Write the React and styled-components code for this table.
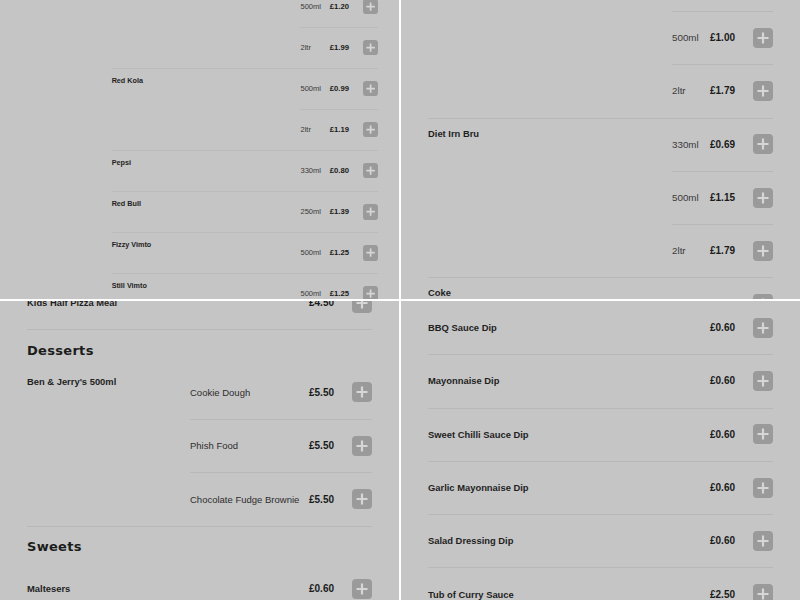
import styled, { createGlobalStyle } from "styled-components";

const GlobalStyle = createGlobalStyle`
  html, body {
    margin: 0;
    padding: 0;
    background: #ffffff;
  }
  * {
    box-sizing: border-box;
  }
`;

const ROW = 53.3;
const LINE = "#b8b8b8";

const Board = styled.div`
  display: grid;
  grid-template-columns: 399px 399px;
  grid-template-rows: 299px 299px;
  gap: 2px;
  width: 800px;
  height: 600px;
  background: #ffffff;
`;

const Panel = styled.div`
  overflow: hidden;
  background: #c5c5c5;
`;

const Sheet = styled.div`
  zoom: ${(p) => p.$zoom || 1};
  margin-top: ${(p) => p.$offset || 0}px;
  padding: 0 27px 0 ${(p) => p.$left || 27}px;
  font-family: "Liberation Sans", Arial, sans-serif;
  color: #1e1e1e;
`;

// separators are drawn as inset shadows so they add no height
const ProductRow = styled.div`
  display: flex;
  align-items: flex-start;
  box-shadow: ${(p) => (p.$divided ? `inset 0 1px 0 ${LINE}` : "none")};
`;

const ProductName = styled.div`
  flex: 1;
  padding-top: 10px;
  font-size: 9.4px;
  line-height: 12px;
  font-weight: 700;
  color: #1f1f1f;
`;

const Variants = styled.div`
  width: ${(p) => p.$width}px;
  flex-shrink: 0;
`;

const VariantRow = styled.div`
  display: flex;
  align-items: center;
  height: ${ROW}px;
  box-shadow: ${(p) => (p.$divided ? `inset 0 1px 0 ${LINE}` : "none")};
`;

const Size = styled.span`
  width: 38px;
  font-size: 9.8px;
  color: #3a3a3a;
`;

const VariantLabel = styled.span`
  flex: 1;
  font-size: 9.5px;
  color: #2e2e2e;
  white-space: nowrap;
`;

const Price = styled.span`
  width: 43px;
  font-size: 10px;
  font-weight: 700;
  color: #1a1a1a;
`;

const ItemRow = styled.div`
  display: flex;
  align-items: center;
  height: ${ROW}px;
  box-shadow: ${(p) => (p.$divided ? `inset 0 1px 0 ${LINE}` : "none")};
`;

const ItemName = styled.span`
  flex: 1;
  font-size: 9.4px;
  font-weight: 700;
  color: #1f1f1f;
`;

const Heading = styled.h2`
  margin: 0;
  padding: 12.5px 0 7px;
  box-shadow: ${(p) => (p.$divided ? `inset 0 1px 0 ${LINE}` : "none")};
  font-family: "DejaVu Sans", sans-serif;
  font-size: 13px;
  line-height: 17px;
  letter-spacing: 0.3px;
  font-weight: 700;
  color: #1c1c1c;
`;

const AddButton = styled.button`
  width: 20px;
  height: 20px;
  padding: 0;
  border: none;
  border-radius: 4px;
  background: #9a9a9a;
  display: grid;
  place-items: center;
  flex-shrink: 0;
  cursor: pointer;
`;

const PlusIcon = () => (
  <svg width="12" height="12" viewBox="0 0 12 12">
    <path d="M6 0.5V11.5M0.5 6H11.5" stroke="#d6d6d6" strokeWidth="2.2" />
  </svg>
);

const Add = () => (
  <AddButton aria-label="Add">
    <PlusIcon />
  </AddButton>
);

// drink with sizes: name on the left, one row per size
const Drink = ({ name, sizes, divided, continued }) => (
  <ProductRow $divided={divided}>
    <ProductName>{name}</ProductName>
    <Variants $width={101}>
      {sizes.map((s, i) => (
        <VariantRow key={i} $divided={i > 0 || continued}>
          <Size>{s.size}</Size>
          <Price>{s.price}</Price>
          <Add />
        </VariantRow>
      ))}
    </Variants>
  </ProductRow>
);

const Item = ({ name, price, divided }) => (
  <ItemRow $divided={divided}>
    <ItemName>{name}</ItemName>
    <Price>{price}</Price>
    <Add />
  </ItemRow>
);

const topLeftDrinks = [
  { name: "", sizes: [{ size: "500ml", price: "£1.20" }, { size: "2ltr", price: "£1.99" }] },
  { name: "Red Kola", sizes: [{ size: "500ml", price: "£0.99" }, { size: "2ltr", price: "£1.19" }] },
  { name: "Pepsi", sizes: [{ size: "330ml", price: "£0.80" }] },
  { name: "Red Bull", sizes: [{ size: "250ml", price: "£1.39" }] },
  { name: "Fizzy Vimto", sizes: [{ size: "500ml", price: "£1.25" }] },
  { name: "Still Vimto", sizes: [{ size: "500ml", price: "£1.25" }] },
];

const topRightDrinks = [
  { name: "", continued: true, sizes: [{ size: "500ml", price: "£1.00" }, { size: "2ltr", price: "£1.79" }] },
  {
    name: "Diet Irn Bru",
    sizes: [
      { size: "330ml", price: "£0.69" },
      { size: "500ml", price: "£1.15" },
      { size: "2ltr", price: "£1.79" },
    ],
  },
  { name: "Coke", sizes: [{ size: "", price: "" }] },
];

const iceCreams = [
  { label: "Cookie Dough", price: "£5.50" },
  { label: "Phish Food", price: "£5.50" },
  { label: "Chocolate Fudge Brownie", price: "£5.50" },
];

const dips = [
  { name: "BBQ Sauce Dip", price: "£0.60" },
  { name: "Mayonnaise Dip", price: "£0.60" },
  { name: "Sweet Chilli Sauce Dip", price: "£0.60" },
  { name: "Garlic Mayonnaise Dip", price: "£0.60" },
  { name: "Salad Dressing Dip", price: "£0.60" },
  { name: "Tub of Curry Sauce", price: "£2.50" },
];

const App = () => (
  <>
    <GlobalStyle />
    <Board>
      <Panel>
        <Sheet $zoom={0.77} $left={145} $offset={-18}>
          {topLeftDrinks.map((d, i) => (
            <Drink key={i} {...d} divided={i > 0} />
          ))}
        </Sheet>
      </Panel>

      <Panel>
        <Sheet $offset={11}>
          {topRightDrinks.map((d, i) => (
            <Drink key={i} {...d} divided={i > 0} />
          ))}
        </Sheet>
      </Panel>

      <Panel>
        <Sheet $offset={-25}>
          <Item name="Kids Half Pizza Meal" price="£4.50" />
          <Heading $divided>Desserts</Heading>
          <ProductRow>
            <ProductName>Ben &amp; Jerry's 500ml</ProductName>
            <Variants $width={182}>
              {iceCreams.map((v, i) => (
                <VariantRow key={v.label} $divided={i > 0}>
                  <VariantLabel>{v.label}</VariantLabel>
                  <Price>{v.price}</Price>
                  <Add />
                </VariantRow>
              ))}
            </Variants>
          </ProductRow>
          <Heading $divided>Sweets</Heading>
          <Item name="Maltesers" price="£0.60" />
        </Sheet>
      </Panel>

      <Panel>
        <Sheet>
          {dips.map((d, i) => (
            <Item key={d.name} {...d} divided={i > 0} />
          ))}
        </Sheet>
      </Panel>
    </Board>
  </>
);

export default App;
